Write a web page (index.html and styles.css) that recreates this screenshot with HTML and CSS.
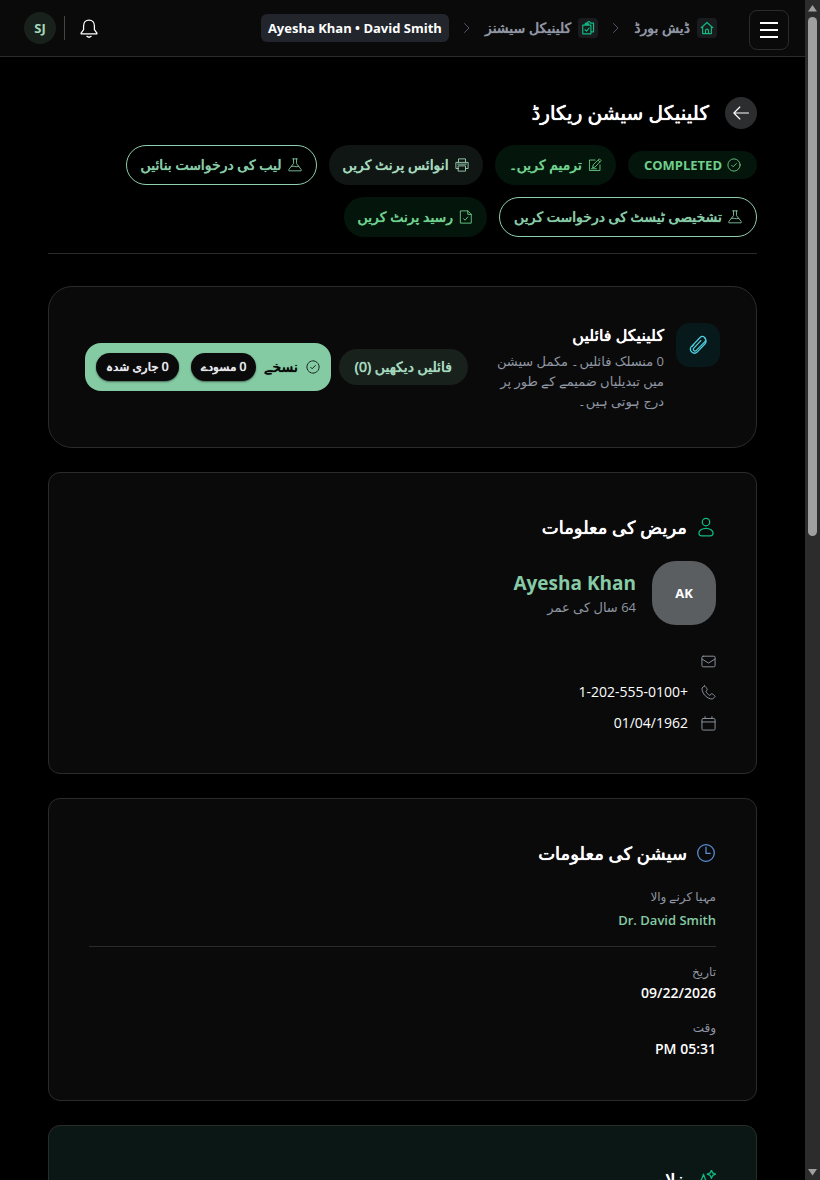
FILE: index.html
```html
<!DOCTYPE html>
<html lang="ur" dir="rtl">
<head>
    <meta charset="UTF-8">
    <meta name="viewport" content="width=device-width, initial-scale=1">
    <title>کلینیکل سیشن ریکارڈ</title>
    <link rel="stylesheet" href="styles.css">
</head>
<body>
    <div class="scrollbar">
        <svg class="arrow" viewBox="0 0 15 16"><path d="M7.500 5L12 11.500H3z"/></svg>
        <div class="thumb"></div>
        <svg class="arrow" viewBox="0 0 15 16"><path d="M7.500 11.500L12 5H3z"/></svg>
    </div>
    <div class="app">
        <header class="topbar">
            <button class="menu" type="button" aria-label="مینو"><span></span><span></span><span></span></button>
            <nav class="crumbs">
                <a href="#"><span class="crumb-icon"><svg class="icon" viewBox="0 0 24 24"><path d="M2 11.500L12 2.500l10 9M4.500 9.500V21.500h15V9.500M9.500 21.500v-5a2.500 2.500 0 0 1 5 0v5"/></svg></span>ڈیش بورڈ</a>
                <svg class="icon chevron" viewBox="0 0 24 24"><path d="M7 3l9 9-9 9"/></svg>
                <a href="#"><span class="crumb-icon"><svg class="icon" viewBox="0 0 24 24"><path d="M8 6V3.500h3a2.500 2.500 0 0 1 5 0h5.500v15H17M3 7h14v15H3zM7 7V5h6v2M7 15l2.500 2.500L14 12"/></svg></span>کلینیکل سیشنز</a>
                <svg class="icon chevron" viewBox="0 0 24 24"><path d="M7 3l9 9-9 9"/></svg>
                <span class="current" dir="ltr">Ayesha Khan • David Smith</span>
            </nav>
            <div class="tools">
                <button class="bell" type="button" aria-label="اطلاعات"><svg class="icon" viewBox="0 0 24 24"><path d="M12 2.500c-4 0-6.500 3-6.500 7V14L2.500 18v1h19v-1l-3-4V9.500c0-4-2.500-7-6.500-7zM9.500 22c1.500 1.300 3.500 1.300 5 0"/></svg></button>
                <button class="user" type="button">SJ</button>
            </div>
        </header>

        <main>
            <div class="heading">
                <button class="back" type="button" aria-label="واپس"><svg class="icon" viewBox="0 0 24 24"><path d="M22 12H2.500M10.500 4l-8 8 8 8"/></svg></button>
                <h1>کلینیکل سیشن ریکارڈ</h1>
            </div>
            <div class="actions">
                <span class="status"><svg class="icon" viewBox="0 0 24 24"><circle cx="12" cy="12" r="10.500"/><path d="M8 12.500l2.500 2.500L16 9.500"/></svg>COMPLETED</span>
                <button class="btn green" type="button"><svg class="icon" viewBox="0 0 24 24"><path d="M12 3.500H2.500v18h18V12M8 16l1-4.500L19.500 1.500l3 3L12.500 15zM17.500 4l2.500 2.500M5.500 18.500h9"/></svg>ترمیم کریں۔</button>
                <button class="btn grey" type="button"><svg class="icon" viewBox="0 0 24 24"><path d="M6 7V1.500h12V7M6 18H1.500V7.500h21V18H18M6 13.500h12v9H6zM4.500 10.500h15"/></svg>انوائس پرنٹ کریں</button>
                <button class="btn outline" type="button"><svg class="icon" viewBox="0 0 24 24"><path d="M8 1.500h8M9.500 1.500v8L1.500 19.500v2.500h21v-2.500L14.500 9.500v-8M6 14.500c4-2 7 2 12 0"/></svg>لیب کی درخواست بنائیں</button>
                <button class="btn outline" type="button"><svg class="icon" viewBox="0 0 24 24"><path d="M8 1.500h8M9.500 1.500v8L1.500 19.500v2.500h21v-2.500L14.500 9.500v-8M6 14.500c4-2 7 2 12 0"/></svg>تشخیصی ٹیسٹ کی درخواست کریں</button>
                <button class="btn green" type="button"><svg class="icon" viewBox="0 0 24 24"><path d="M3 1.500h12l6 6v15H3zM15 1.500v6h6M8 15l2.500 2.500L15 12"/></svg>رسید پرنٹ کریں</button>
            </div>

            <section class="card files">
                <div class="clip"><svg class="icon" viewBox="0 0 24 24"><path d="M20.500 10.500l-9.500 10a4.800 4.800 0 0 1-7-6.500l10.500-11a3.800 3.800 0 0 1 5.500 5.300L10 18.500a2 2 0 0 1-3-2.800l8.500-9M20.500 10.500a5 5 0 0 0-.5-7M7 11.500l-2 2.200"/></svg></div>
                <div class="files-text">
                    <h3>کلینیکل فائلیں</h3>
                    <p>0 منسلک فائلیں۔ مکمل سیشن میں تبدیلیاں ضمیمے کے طور پر درج ہوتی ہیں۔</p>
                </div>
                <div class="files-actions">
                    <button class="view" type="button">فائلیں دیکھیں (0)</button>
                    <button class="rx" type="button">
                        <svg class="icon" viewBox="0 0 24 24"><circle cx="12" cy="12" r="10.500" stroke-dasharray="5 1.600"/><path d="M8 12.500l2.500 2.500L16 9.500"/></svg>
                        نسخے
                        <span class="count">0 مسودے</span>
                        <span class="count">0 جاری شدہ</span>
                    </button>
                </div>
            </section>

            <section class="card info">
                <h2><svg class="icon emerald" viewBox="0 0 24 24"><circle cx="12" cy="6" r="4.500"/><path d="M12 13.500c-5 0-8.500 3-8.500 6 0 2 1.500 3 3.500 3h10c2 0 3.500-1 3.500-3 0-3-3.500-6-8.500-6z"/></svg>مریض کی معلومات</h2>
                <div class="patient">
                    <div class="photo">AK</div>
                    <div>
                        <a class="name" href="#">Ayesha Khan</a>
                        <p class="age">64 سال کی عمر</p>
                    </div>
                </div>
                <ul class="contact">
                    <li><svg class="icon" viewBox="0 0 24 24"><rect x="1.500" y="3.500" width="21" height="17" rx="2"/><path d="M1.500 8L12 14.500 22.500 8"/></svg></li>
                    <li><svg class="icon" viewBox="0 0 24 24"><path d="M5.500 1.500L1.500 5c0 9 8.500 17.500 17 17.500l4-4c0-1.500-4-4.500-5.500-4.500l-3 2.500C11.500 15.500 9 13 8 10.500l2-3C9.500 5.500 7.500 2 5.500 1.500z"/></svg>+1-202-555-0100</li>
                    <li><svg class="icon" viewBox="0 0 24 24"><rect x="1.500" y="4" width="21" height="18.500" rx="2"/><path d="M1.500 9.500h21M6.500 1v3M17.500 1v3"/></svg>01/04/1962</li>
                </ul>
            </section>

            <section class="card info">
                <h2><svg class="icon blue" viewBox="0 0 24 24"><circle cx="12" cy="12" r="10"/><path d="M12 5v7.500h5"/></svg>سیشن کی معلومات</h2>
                <dl>
                    <div class="provider"><dt>مہیا کرنے والا</dt><dd><a href="#">Dr. David Smith</a></dd></div>
                    <div><dt>تاریخ</dt><dd>09/22/2026</dd></div>
                    <div><dt>وقت</dt><dd>05:31 PM</dd></div>
                </dl>
            </section>

            <section class="card info summary">
                <h2><svg class="icon emerald" viewBox="0 0 24 24"><path d="M9 5l2.500 7L18 15l-6.500 3L9 24l-2.500-6L0 15l6.500-3zM18.500 0l1.500 3.500L23.500 5l-3.500 1.500L18.500 10 17 6.500 13.500 5 17 3.500z"/></svg>خلاصہ</h2>
            </section>
        </main>
    </div>
</body>
</html>
```
FILE: styles.css
```css
* {box-sizing:border-box;}
body,h1,h2,h3,p,ul,dl,dd {margin:0;padding:0;}
ul {list-style-type:none;}
a {color:inherit;text-decoration:none;}
button {border:none;background:none;color:inherit;font:inherit;padding:0;cursor:pointer;}

body {display:flex;height:100vh;overflow:hidden;background:#000;color:#fff;font:13px/20px "Open Sans","Noto Sans","DejaVu Sans",sans-serif;}
.icon {flex:none;width:14px;height:14px;fill:none;stroke:currentColor;stroke-width:1.5;stroke-linecap:round;stroke-linejoin:round;}

/* the Urdu face has no medium weight, the shadow thickens it a little */
h1,h2,h3,.crumbs a,.btn,.view,.rx {font-weight:500;text-shadow:0 0 0 currentColor,0 0 1px currentColor;}

.scrollbar {flex:none;display:flex;flex-direction:column;width:15px;background:#2c2c2c;}
.arrow {flex:none;width:15px;height:16px;fill:#9f9f9f;}
.thumb {height:44%;margin:1px 3px auto;border-radius:5px;background:#9f9f9f;}
.app {flex:1;min-width:0;overflow:hidden;}

/* top bar */
.topbar {display:flex;align-items:center;height:57px;padding:0 16px 0 24px;border-bottom:1px solid #2a2c2c;background:#0a0a0a;}
.menu {display:flex;flex-direction:column;align-items:center;justify-content:center;gap:5px;width:40px;height:40px;margin-top:4px;border:1px solid #2a2c2c;border-radius:8px;}
.menu span {width:18px;height:2px;background:#fff;}
.crumbs {display:flex;align-items:center;gap:12px;margin-right:32px;color:#8f96a3;white-space:nowrap;}
.crumbs a {display:flex;align-items:center;gap:7px;font-size:14px;}
.crumb-icon {display:flex;align-items:center;justify-content:center;width:20px;height:20px;border-radius:4px;background:#191b1e;color:#10b981;}
.crumb-icon .icon {width:14px;height:14px;stroke-width:2;}
.chevron {width:12px;height:12px;color:#6b7280;}
.current {padding:4px 7px;border-radius:6px;background:#22252c;color:#fff;font-weight:700;}
.tools {display:flex;align-items:center;margin-right:auto;}
.bell {display:flex;align-items:center;height:24px;margin-left:8px;padding:0 14px;border-left:1px solid #41464c;}
.bell .icon {width:20px;height:20px;}
.user {width:32px;height:32px;border-radius:50%;background:#19211d;color:#a3d9bc;font-weight:700;}

/* page heading */
main {padding:40px 48px;}
.heading {display:flex;align-items:center;gap:16px;}
.back {display:flex;align-items:center;justify-content:center;width:32px;height:32px;border-radius:50%;background:#2c2d2f;}
.back .icon {width:18px;height:18px;}
h1 {font-size:20px;line-height:32px;}
.actions {display:flex;flex-wrap:wrap;align-items:center;gap:12px;margin-top:16px;padding-bottom:16px;border-bottom:1px solid #2a2c2c;font-size:14px;white-space:nowrap;}
.status {display:flex;align-items:center;gap:5px;height:28px;padding:0 16px;border-radius:14px;background:#04150b;color:#6fd08c;font-size:13px;font-weight:700;}
.btn {display:flex;align-items:center;gap:6px;height:40px;padding:0 14px;border-radius:20px;}
.green {background:#04150b;color:#6fd08c;}
.grey {background:#101613;color:#a3d9bc;}
.outline {border:1px solid #8fcfac;color:#86cba6;}

/* cards */
.card {margin-top:24px;border:1px solid #2a2c2c;border-radius:12px;background:#0a0a0a;}
.files {display:flex;align-items:center;margin-top:32px;padding:36px;border-radius:24px;}
.clip {display:flex;align-items:center;justify-content:center;align-self:flex-start;flex:none;width:44px;height:44px;border-radius:14px;background:#08191c;color:#4fd1e0;}
.clip .icon {width:20px;height:20px;}
.files-text {flex:1;margin-right:12px;color:#8f96a3;}
h3 {margin-bottom:4px;color:#fff;font-size:16px;line-height:24px;}
.files-actions {display:flex;align-items:center;gap:8px;margin-right:16px;font-size:14px;white-space:nowrap;}
.view {height:36px;padding:0 16px;border-radius:18px;background:#19211d;color:#a3d9bc;}
.rx {display:flex;align-items:center;gap:8px;height:48px;padding:0 11px;border-radius:16px;background:#84cba4;color:#0a0a0a;}
.count {padding:4px 10px;border-radius:14px;background:#0a0a0a;color:#e5e7eb;font-size:12px;box-shadow:0 1px 2px rgba(0,0,0,.5);}
.count + .count {margin-right:4px;}

.info {padding:40px;}
h2 {display:flex;align-items:center;gap:9px;font-size:18px;line-height:28px;}
h2 .icon {width:20px;height:20px;}
.emerald {color:#10b981;}
.blue {color:#5b8fd9;}
.patient {display:flex;align-items:center;gap:16px;margin-top:20px;}
.photo {display:flex;align-items:center;justify-content:center;width:64px;height:64px;border-radius:24px;background:#5b5e61;font-weight:700;}
.name {display:block;color:#86cba6;font-size:19px;line-height:28px;font-weight:700;}
.age {color:#8f96a3;line-height:20px;}
.contact {display:flex;flex-direction:column;gap:11px;margin-top:26px;}
.contact li {display:flex;align-items:center;gap:13px;min-height:20px;font-size:14px;}
.contact .icon {width:15px;height:15px;color:#8f96a3;}
dl {margin-top:20px;}
dl div {margin-top:14px;}
dt {color:#8f96a3;font-size:12px;line-height:20px;}
dd {font-size:14px;line-height:22px;font-weight:600;}
dl .provider {margin-bottom:15px;padding-bottom:15px;border-bottom:1px solid #2a2c2c;}
.provider dd {margin-top:2px;color:#86cba6;font-size:13px;}
.summary {height:300px;background:#0a1715;}
```
